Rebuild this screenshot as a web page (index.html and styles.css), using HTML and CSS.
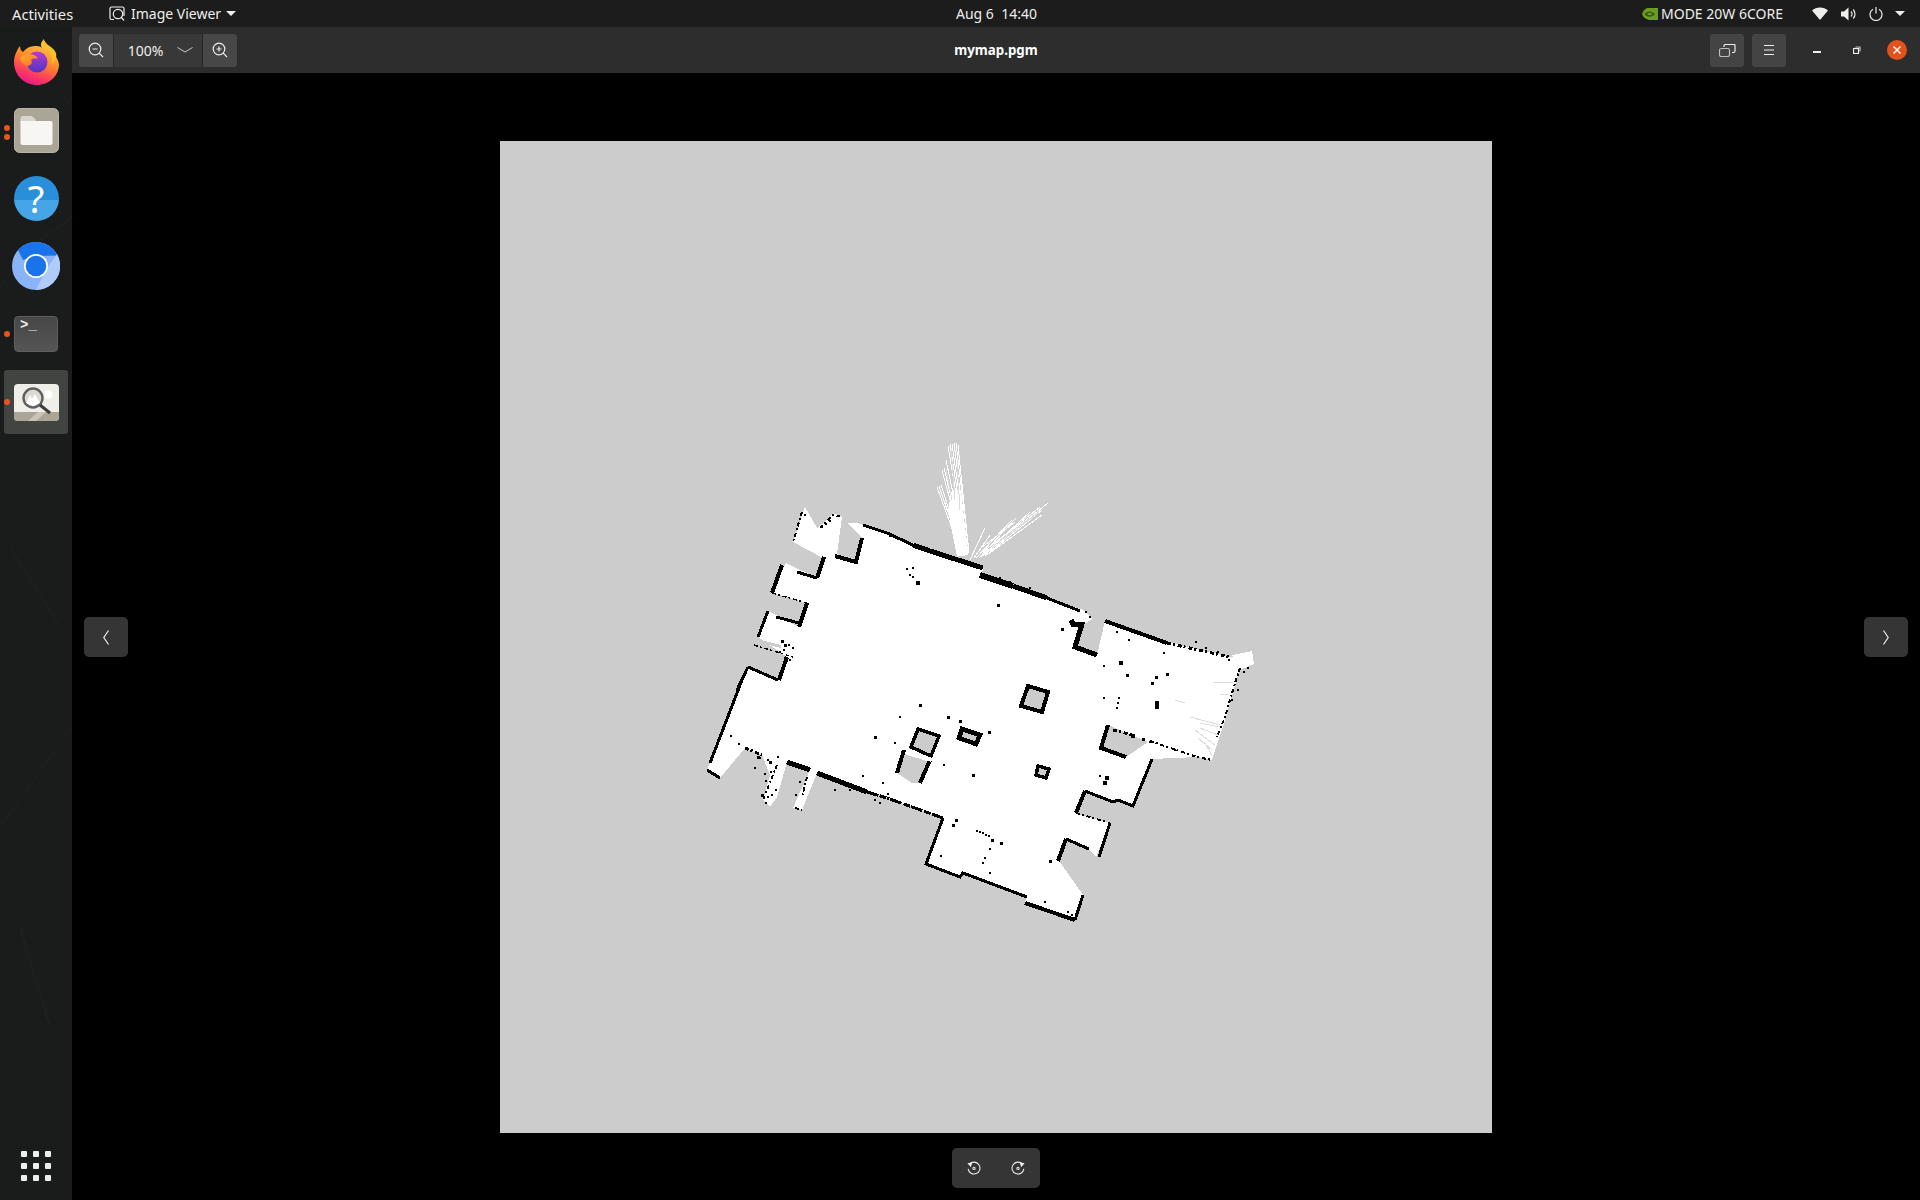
FILE: index.html
```html
<!DOCTYPE html>
<html lang="en">
<head>
<meta charset="utf-8">
<title>mymap.pgm - Image Viewer</title>
<link rel="stylesheet" href="styles.css">
</head>
<body>
<header class="topbar">
  <div class="tb-left">
    <span class="tb-activities">Activities</span>
    <span class="tb-app">
      <svg class="tb-appicon" viewBox="0 0 16 16"><path class="ln" d="M5 13.500H2.500a1.500 1.500 0 0 1-1.500-1.500V2.500A1.500 1.500 0 0 1 2.500 1h11A1.500 1.500 0 0 1 15 2.500V10"/><circle class="ln" cx="9" cy="8" r="4.700"/><path class="ln" d="M12.500 11.500l2.500 3"/></svg>
      <span>Image Viewer</span>
      <i class="tri"></i>
    </span>
  </div>
  <time class="tb-clock">Aug 6&nbsp; 14:40</time>
  <div class="tb-right">
    <svg class="tb-nvidia" viewBox="0 0 16 12"><path class="nv" d="M5 0h11v12H7C3 11 1 9 0 6 1 3 3 1 5 0z"/><path class="nvd" d="M2.500 6C5 2.500 10 2.500 13 6 10 9.500 5 9.500 2.500 6z"/><path class="nv" d="M5 6C7 4 9 4.500 10.500 6 9 7.500 7 8 5 6z"/></svg>
    <span class="tb-mode">MODE 20W 6CORE</span>
    <svg class="tb-wifi" viewBox="0 0 16 13"><path class="fillw" d="M8 13L0 3.500C2 1.500 5 .5 8 .5s6 1 8 3z"/></svg>
    <svg class="tb-vol" viewBox="0 0 15 14"><path class="fillw" d="M0 4.500h3L7.500 .5v13L3 9.500H0z"/><path class="ln" d="M10 4.500a3.500 3.500 0 0 1 0 5M12.200 2.500a6.500 6.500 0 0 1 0 9"/></svg>
    <svg class="tb-pow" viewBox="0 0 14 14"><path class="ln" d="M4 2.300a6 6 0 1 0 6 0M7 0v6.500"/></svg>
    <i class="tri tri-r"></i>
  </div>
</header>

<div class="desktop">
  <nav class="dock">
    <svg class="dock-bg" viewBox="0 0 72 1173" preserveAspectRatio="none"><path class="dock-line" d="M0 260L30 220 72 190M0 350L28 325M10 520L60 600M0 800L72 700M20 900L50 1000M50 100L72 70M40 610L72 640"/></svg>
    <div class="dock-item">
      <svg class="ic-firefox" viewBox="0 0 45 46">
        <defs>
          <linearGradient id="ffa" x1=".7" y1="0" x2=".3" y2="1"><stop offset="0" stop-color="#ffd93a"/><stop offset=".45" stop-color="#ff8a2a"/><stop offset=".75" stop-color="#ff3d5c"/><stop offset="1" stop-color="#e3168c"/></linearGradient>
          <linearGradient id="ffb" x1=".5" y1="0" x2=".5" y2="1"><stop offset="0" stop-color="#b63bd0"/><stop offset="1" stop-color="#4f35c4"/></linearGradient>
          <linearGradient id="ffc" x1="0" y1="0" x2="1" y2="1"><stop offset="0" stop-color="#ffb22e"/><stop offset="1" stop-color="#ff6a1e"/></linearGradient>
        </defs>
        <path fill="url(#ffa)" d="M30 0c-1 5 2 8 6 11 5 4 8 9 9 14 0 12-10 21-22 21C10 46 0 36 0 23 0 17 3 11 6 7c0 3 1 5 3 6 3-4 7-6 12-6 2 0 5 0 7 2-2-3-1-6 2-9z"/>
        <circle fill="url(#ffb)" cx="23" cy="23" r="10.500"/>
        <path fill="url(#ffc)" d="M6 19c4-4 9-5 14-3 3 1 4 3 3 4-3-1-5 0-6 1 2 3 0 5-3 6-4 0-7-4-8-8z"/>
        <path fill="#ffc02e" d="M30 0c-2 4 0 7 3 10 4 4 6 9 5 15 3-3 5-7 4-11-2-4-5-6-8-8-2-2-4-4-4-6z"/>
      </svg>
    </div>
    <div class="dock-item">
      <i class="run run-a"></i><i class="run run-b"></i>
      <svg class="ic-files" viewBox="0 0 45 45"><rect class="fl-bg" x=".5" y=".5" width="44" height="44" rx="5"/><path class="fl-back" d="M6.500 15v-5a2 2 0 0 1 2-2h9l4 3v4z"/><path class="fl-front" d="M6.500 13h30a2 2 0 0 1 2 2v20a2 2 0 0 1-2 2h-28a2 2 0 0 1-2-2z"/></svg>
    </div>
    <div class="dock-item">
      <span class="ic-help"><span class="ic-help-q">?</span></span>
    </div>
    <div class="dock-item">
      <svg class="ic-chrome" viewBox="0 0 48 48"><circle class="cr-a" cx="24" cy="24" r="24"/><path class="cr-b" d="M24 0a24 24 0 0 1 21.500 13.500L24 14 11 18 6 8A24 24 0 0 1 24 0z"/><path class="cr-c" d="M45 12a24 24 0 0 1-21 36l10-20z"/><circle class="cr-d" cx="24" cy="24" r="12"/><circle class="cr-e" cx="24" cy="24" r="10.300"/></svg>
    </div>
    <div class="dock-item">
      <i class="run run-c"></i>
      <span class="ic-term"><span class="ic-term-p">&gt;_</span></span>
    </div>
    <div class="dock-item dock-item-on">
      <i class="run run-c"></i>
      <svg class="ic-viewer" viewBox="0 0 45 37"><rect class="vw-bg" width="45" height="37" rx="4"/><path class="vw-band" d="M0 28h45v5a4 4 0 0 1-4 4H4a4 4 0 0 1-4-4z"/><path class="vw-band2" d="M14 37l10-9h8L22 37z"/><circle class="vw-sun" cx="34.500" cy="10.500" r="4"/><circle class="vw-lens" cx="19" cy="14" r="9.500"/><path class="vw-mt" d="M12 19l4-8 2 4 3-5 5 9-7 3z"/><path class="vw-handle" d="M26 21l10 8"/></svg>
    </div>
    <div class="dock-grid">
      <i></i><i></i><i></i><i></i><i></i><i></i><i></i><i></i><i></i>
    </div>
  </nav>

  <main class="window">
    <div class="headerbar">
      <div class="hb-zoom">
        <button class="hb-btn hb-z"><svg class="ic16" viewBox="0 0 16 16"><circle class="ln" cx="7" cy="7" r="5.800"/><path class="ln" d="M11.200 11.200L15 15M4.500 7h5"/></svg></button>
        <button class="hb-btn hb-pct"><span>100%</span><svg class="ic-chev" viewBox="0 0 16 6"><path class="ln-thin" d="M.5.5L8 5 15.500.5"/></svg></button>
        <button class="hb-btn hb-z"><svg class="ic16" viewBox="0 0 16 16"><circle class="ln" cx="7" cy="7" r="5.800"/><path class="ln" d="M11.200 11.200L15 15M4.500 7h5M7 4.500v5"/></svg></button>
      </div>
      <div class="hb-title">mymap.pgm</div>
      <div class="hb-right">
        <button class="hb-btn hb-tool"><svg class="ic16w" viewBox="0 0 17 13"><path class="ln" d="M5 3V2a1.500 1.500 0 0 1 1.500-1.500h9A1.500 1.500 0 0 1 16 2v5a1.500 1.500 0 0 1-1.500 1.500H13"/><rect class="ln-dim" x=".5" y="4.500" width="10" height="8" rx="1.800"/></svg></button>
        <button class="hb-btn hb-tool"><svg class="ic16" viewBox="0 0 16 16"><path class="ln" d="M3 3.500h10M3 8h10M3 12.500h10"/></svg></button>
        <div class="hb-winctl">
          <span class="wc wc-min"></span>
          <svg class="wc-max" viewBox="0 0 8 8"><path class="ln-dim" d="M2.500 1h4.500v4.500"/><rect class="ln" x=".5" y="2.500" width="5" height="5"/></svg>
          <span class="wc-close"><svg class="wc-x" viewBox="0 0 8 8"><path class="ln-x" d="M.5.5l7 7M7.500.5l-7 7"/></svg></span>
        </div>
      </div>
    </div>
    <div class="canvas">
      <svg class="map" viewBox="500 141 992 992">
        <rect class="m-gray" x="500" y="141" width="992" height="992"/>
        <!-- free space -->
        <path class="m-white" d="M805 507L817 528 827 520 833 513 842 517 837 554 856 562 862 538 848 523 858 523 983 568 982 575 1083 610 1092 619 1080 627 1073 647 1097 655 1105 621 1168 642 1230 657 1250 653 1252 663 1240 668 1225 720 1212 760 1197 757 1152 759 1133 806 1118 800 1113 802 1085 791 1075 813 1110 823 1096 857 1089 849 1066 839 1058 861 1062 865 1083 895 1075 920 1025 903 1027 897 963 873 960 877 926 864 943 818 817 773 802 810 793 808 810 770 787 762 777 797 770 807 763 800 770 775 762 755 745 748 720 778 707 770 748 667 779 680 787 657 758 637 768 611 799 627 807 603 772 593 786 563 817 578 823 558 793 542z"/>
        <!-- rays -->
        <path class="m-white" d="M957 557L948 510 952 490 961 490 968 553z"/>
        <path class="m-ray" d="M962 556L937 487M963 556L939 486M964 556L941 485M965 556L942 470M965 555L944 468M966 555L946 460M966 555L948 446M967 555L950 444M968 555L952 444M968 554L954 443M969 553L956 443M969 553L958 445M970 560L985 528M974 558L990 535M976 558L1012 520M979 558L1016 518M981 557L1030 512M983 556L1048 503M985 556L1042 510M987 555L1042 515M983 552L1040 507M985 550L1037 512M981 548L1015 522"/>
        <path class="m-graythin" d="M952 500L946 470M955 500L951 448M960 510L957 460M1000 540L1030 518M1005 538L1038 513M1213 682L1233 682M1220 694L1228 694M1190 717L1220 725M1200 723L1220 727M1195 730L1215 745M1200 728L1218 735M1204 742L1212 755M1198 738L1212 750M1175 700L1185 703"/>
        <path class="m-white" d="M1232 655L1252 651 1254 664 1240 670 1236 660z"/>
        <!-- islands -->
        <path class="m-gray m-w4" d="M1028 686L1048 692 1042 712 1021 706z"/>
        <path class="m-gray m-w5" d="M962 729L980 735 976 744 959 738z"/>
        <path class="m-gray m-w3" d="M918 729L939 736 931 756 911 747z"/>
        <path class="m-gray" d="M904 754L930 762 920 783 912 783 897 773z"/>
        <path class="m-wall w4" d="M904 750L897 773M930 760L920 783"/>
        <path class="m-gray m-w3" d="M1038 766L1049 769 1046 778 1036 775z"/>
        <path class="m-gray" d="M1108 725L1148 742 1126 757 1101 748z"/>
        <path class="m-white" d="M909 750L932 758 931 762 905 752z"/>
        <path class="m-gray" d="M757 639L781 645 781 648 757 642z"/>
        <!-- walls -->
        <path class="m-wall w3" d="M863 525L887 533 913 545"/>
        <path class="m-wall w5" d="M913 545L930 551 983 568"/>
        <path class="m-wall w6" d="M980 575L1013 586"/>
        <path class="m-wall w5" d="M1013 586L1047 598"/>
        <path class="m-wall w3" d="M1047 598L1080 611"/>
        <path class="m-wall w5" d="M1071 620L1073 624 1082 624 1075 647 1097 655"/>
        <path class="m-wall w4" d="M1105 621L1167 643"/>
        <path class="m-wall w3 dash" d="M1167 643L1230 657"/>
        <path class="m-wall w2 dash" d="M1240 668L1235 683 1225 717 1217 737"/>
        <path class="m-wall w2 dash" d="M1150 741L1197 757 1212 760"/>
        <path class="m-wall w4" d="M1108 725L1101 748 1126 757"/>
        <path class="m-wall w3 dash" d="M1113 730L1133 735"/>
        <path class="m-wall w3" d="M1152 759L1133 806 1118 800 1113 802"/>
        <path class="m-wall w3" d="M1113 802L1085 791"/>
        <path class="m-wall w4" d="M1085 791L1076 813"/>
        <path class="m-wall w2 dash" d="M1076 813L1110 823"/>
        <path class="m-wall w3" d="M1110 823L1099 857M1089 849L1066 839"/>
        <path class="m-wall w4" d="M1066 839L1058 861"/>
        <path class="m-wall w3" d="M1083 895L1075 920"/>
        <path class="m-wall w4" d="M1075 920L1025 903"/>
        <path class="m-wall w3" d="M1027 897L963 873 960 877 926 864 943 818"/>
        <path class="m-wall w3 dashlong" d="M943 818L887 798"/>
        <path class="m-wall w5" d="M817 773L867 792"/>
        <path class="m-wall w3 dashlong" d="M867 792L887 798"/>
        <path class="m-wall w5" d="M787 762L810 770"/>
        <path class="m-wall w2 dash" d="M807 777L802 797M795 808L802 810M777 765L763 800"/>
        <path class="m-wall w3" d="M742 680L710 763"/>
        <path class="m-wall w3" d="M748 667L737 690M707 770L720 778"/>
        <path class="m-wall w3 dash" d="M745 748L762 755"/>
        <path class="m-wall w3" d="M748 667L778 680"/>
        <path class="m-wall w4" d="M779 680L787 657"/>
        <path class="m-wall w3" d="M768 611L758 637M776 617L799 623"/>
        <path class="m-wall w4" d="M799 627L807 603M782 565L772 593"/>
        <path class="m-wall w1 dash" d="M772 593L807 603M754 645L793 657"/>
        <path class="m-wall w3" d="M797 572L817 578"/>
        <path class="m-wall w4" d="M817 578L824 557M835 556L856 562 862 538"/>
        <path class="m-wall w2 dash" d="M802 512L793 542 M820 528L828 520 833 515 842 517"/>
        <!-- speckles -->
        <path class="m-dot d2" d="M907 569h0M913 568h0M910 575h0M913 577h0M1104 666h0M1104 698h0M1129 640h0M1164 653h0M1119 698h0M1118 703h0M1117 708h0M900 717h0M731 736h0M739 744h0M895 743h0M944 765h0M863 776h0M883 783h0M888 794h0M941 856h0M977 831h0M980 832h0M983 833h0M986 835h0M989 836h0M990 849h0M985 858h0M983 863h0M990 873h0M1045 902h0M1068 912h0M1072 915h0M1079 905h0M756 752h0M760 758h0M768 760h0M755 768h0M765 774h0M778 757h0M771 772h0M766 781h0M776 790h0M768 797h0M766 803h0M772 795h0M800 782h0M796 795h0M804 788h0M789 645h0M784 650h0M793 648h0M780 652h0M785 658h0M790 660h0M1117 632h0M1196 642h0M1206 648h0M1218 652h0M1229 660h0M1248 668h0M1244 672h0M1238 690h0M1232 700h0M1150 742h0M1175 750h0M1100 776h0M805 515h0M822 527h0M826 524h0M830 521h0M880 530h0M1086 612h0M1090 617h0M890 536h0M905 541h0M1000 578h0M1030 588h0M1010 582h0M835 790h0M850 790h0M875 800h0M880 803h0"/>
        <path class="m-dot d3" d="M998 605h0M1062 629h0M1127 675h0M1156 677h0M1152 683h0M1167 674h0M920 705h0M948 717h0M960 721h0M989 732h0M875 737h0M973 775h0M953 825h0M956 820h0M1001 843h0M1050 861h0M1143 739h0M758 757h0M770 762h0M762 795h0M782 641h0M785 645h0M992 840h0"/>
        <path class="m-dot d4" d="M918 583h0M1121 663h0M1157 703h0M1157 707h0M1107 778h0M1105 783h0M1133 736h0"/>
      </svg>
      <button class="nav-btn nav-prev"><svg class="ic-nav" viewBox="0 0 6 15"><path class="ln" d="M5.500.5L.8 7.500l4.700 7"/></svg></button>
      <button class="nav-btn nav-next"><svg class="ic-nav" viewBox="0 0 6 15"><path class="ln" d="M.5.500l4.700 7-4.700 7"/></svg></button>
      <div class="osd">
        <svg class="ic-rot" viewBox="0 0 16 16"><path class="ln" d="M3 3.500A6.800 6.800 0 1 1 1.300 9"/><path class="fillw" d="M.5 2.500L6 1.500 4.500 7z"/><circle class="ln" cx="8" cy="8.500" r="1.300"/></svg>
        <svg class="ic-rot" viewBox="0 0 16 16"><path class="ln" d="M13 3.500A6.800 6.800 0 1 0 14.700 9"/><path class="fillw" d="M15.500 2.500L10 1.500 11.500 7z"/><circle class="ln" cx="8" cy="8.500" r="1.300"/></svg>
      </div>
    </div>
  </main>
</div>
</body>
</html>
```
FILE: styles.css
```css
* { box-sizing: border-box; }
html, body { margin: 0; height: 100%; }
body {
  width: 1920px;
  height: 1200px;
  overflow: hidden;
  background: #000;
  display: flex;
  flex-direction: column;
  font-family: "Noto Sans", "Open Sans", sans-serif;
  color: #eeeeec;
}
button { font: inherit; color: inherit; border: 0; padding: 0; margin: 0; }
svg { display: block; }

/* shared svg strokes */
.ln { fill: none; stroke: #eeeeec; stroke-width: 1.2; }
.ln-thin { fill: none; stroke: #c8c8c8; stroke-width: 1; }
.ln-dim { fill: none; stroke: #bdbdbd; stroke-width: 1.2; }
.ln-x { fill: none; stroke: #fff; stroke-width: 1.500; }
.fillw { fill: #eeeeec; }

/* top bar */
.topbar {
  flex: 0 0 27px;
  height: 27px;
  display: flex;
  align-items: center;
  background: #1c1c1c;
  font-size: 14px;
}
.tb-left { flex: 0 0 956px; display: flex; align-items: center; padding-left: 12px; }
.tb-activities { width: 97px; font-size: 14.700px; }
.tb-app { display: flex; align-items: center; }
.tb-appicon { width: 16px; height: 16px; margin-right: 6px; }
.tri { display: block; width: 0; height: 0; margin-left: 5px; border: 5px solid transparent; border-top: 5px solid #eeeeec; border-bottom: 0; }
.tb-clock { width: 80px; white-space: nowrap; font-size: 14px; }
.tb-right { flex: 1; display: flex; align-items: center; justify-content: flex-end; padding-right: 15px; }
.tb-nvidia { width: 16px; height: 12px; }
.nv { fill: #6a9e1f; }
.nvd { fill: #1c1c1c; opacity: .6; }
.tb-mode { margin-left: 3px; width: 123px; white-space: nowrap; }
.tb-wifi { width: 16px; height: 13px; margin-left: 28px; }
.tb-vol { width: 15px; height: 14px; margin-left: 13px; }
.tb-pow { width: 14px; height: 14px; margin-left: 13px; }
.tri-r { margin-left: 12px; }

/* desktop */
.desktop { flex: 1; display: flex; min-height: 0; }

/* dock */
.dock {
  position: relative;
  flex: 0 0 72px;
  width: 72px;
  display: flex;
  flex-direction: column;
  align-items: center;
  gap: 4px;
  padding: 3px 0 19px;
  background: #1a1c1b;
}
.dock-bg { position: absolute; inset: 0; width: 72px; height: 100%; }
.dock-line { fill: none; stroke: #1f2320; stroke-width: 1; }
.dock-item {
  position: relative;
  flex: 0 0 64px;
  width: 64px;
  display: flex;
  align-items: center;
  justify-content: center;
  border-radius: 3px;
}
.dock-item-on { background: #424442; }
.run { position: absolute; left: 0; width: 6px; height: 6px; border-radius: 50%; background: #e95420; }
.run-a { top: 27px; }
.run-b { top: 36px; }
.run-c { top: 29px; }
.ic-firefox { width: 45px; height: 46px; }
.ic-files { width: 45px; height: 45px; }
.fl-bg { fill: #aba595; stroke: #b9b4a6; }
.fl-back { fill: #d8d5cc; }
.fl-front { fill: #f7f6f4; }
.ic-help {
  width: 45px;
  height: 45px;
  border-radius: 50%;
  display: flex;
  align-items: center;
  justify-content: center;
  background: linear-gradient(#2a8fdb 0 54%, #46a5e6 54% 100%);
}
.ic-help-q { font-size: 38px; line-height: 45px; color: #fff; font-family: "Noto Sans", sans-serif; font-weight: 400; }
.ic-chrome { width: 48px; height: 48px; }
.cr-a { fill: #8ab4f8; }
.cr-b { fill: #1a73e8; }
.cr-c { fill: #aecbfa; }
.cr-d { fill: #fff; }
.cr-e { fill: #1a73e8; }
.ic-term {
  width: 44px;
  height: 36px;
  border-radius: 4px;
  border: 1px solid #5e5e5e;
  background: linear-gradient(#474747, #555);
  padding: 0 0 0 5px;
}
.ic-term-p { display: block; font: 700 14px/17px "Liberation Mono", monospace; color: #eee; }
.ic-viewer { width: 45px; height: 37px; }
.vw-bg { fill: #f0eee8; }
.vw-band { fill: #aba595; }
.vw-band2 { fill: #c9c4b6; }
.vw-sun { fill: #fff; }
.vw-mt { fill: #fff; }
.vw-lens { fill: #dcdad3; stroke: #5f5f5f; stroke-width: 2.400; }
.vw-handle { fill: none; stroke: #3c3c3c; stroke-width: 3; }
.dock-grid {
  position: relative;
  margin-top: auto;
  display: grid;
  grid-template-columns: repeat(3, 6px);
  grid-auto-rows: 6px;
  gap: 6px;
}
.dock-grid i { display: block; background: #eee; border-radius: 1px; }

/* window */
.window { flex: 1; display: flex; flex-direction: column; min-width: 0; }
.headerbar {
  position: relative;
  flex: 0 0 46px;
  display: flex;
  align-items: center;
  justify-content: space-between;
  padding: 0 13px 0 7px;
  background: #2d2d2d;
}
.hb-btn {
  display: flex;
  align-items: center;
  justify-content: center;
  height: 33px;
  background: #444;
  border-radius: 3px;
}
.hb-zoom { display: flex; gap: 1px; background: #262626; border-radius: 3px; }
.hb-z { width: 34px; }
.hb-zoom .hb-z:first-child { border-radius: 3px 0 0 3px; background: #474747; }
.hb-zoom .hb-z:last-child { border-radius: 0 3px 3px 0; background: #474747; }
.hb-pct { width: 88px; border-radius: 0; background: #383838; font-size: 14px; padding-left: 5px; gap: 14px; }
.ic16 { width: 16px; height: 16px; }
.ic16w { width: 17px; height: 13px; }
.ic-chev { width: 16px; height: 6px; }
.hb-title {
  position: absolute;
  left: 0;
  right: 0;
  text-align: center;
  font-size: 13.300px;
  font-weight: 700;
  color: #fff;
  pointer-events: none;
}
.hb-right { display: flex; align-items: center; gap: 8px; }
.hb-tool { width: 34px; }
.hb-winctl { display: flex; align-items: center; margin-left: 19px; }
.wc-min { display: block; width: 8px; height: 1.500px; background: #eee; margin-top: 4px; }
.wc-max { width: 8px; height: 8px; margin-left: 32px; }
.wc-close {
  display: flex;
  align-items: center;
  justify-content: center;
  width: 20px;
  height: 20px;
  margin-left: 26px;
  border-radius: 50%;
  background: #e4521c;
}
.wc-x { width: 8px; height: 8px; }

/* canvas */
.canvas {
  position: relative;
  flex: 1;
  display: flex;
  align-items: center;
  justify-content: center;
  background: #000;
}
.map { width: 992px; height: 992px; shape-rendering: crispEdges; }
.m-gray { fill: #cccccc; }
.m-white { fill: #fff; }
.m-ray { fill: none; stroke: #fff; stroke-width: 1; }
.m-graythin { fill: none; stroke: #dcdcdc; stroke-width: 1; }
.m-w3 { stroke: #000; stroke-width: 3.500; }
.m-w4 { stroke: #000; stroke-width: 4; }
.m-w5 { stroke: #000; stroke-width: 4.500; }
.m-wall { fill: none; stroke: #000; stroke-linejoin: miter; }
.w1 { stroke-width: 1.500; }
.w2 { stroke-width: 2; }
.w3 { stroke-width: 3; }
.w4 { stroke-width: 4; }
.w5 { stroke-width: 5; }
.w6 { stroke-width: 6; }
.dash { stroke-dasharray: 4 2 2 3; }
.dashlong { stroke-dasharray: 12 1 7 2; }
.m-dot { fill: none; stroke: #000; stroke-linecap: square; }
.d2 { stroke-width: 2; }
.d3 { stroke-width: 3; }
.d4 { stroke-width: 4; }

.nav-btn {
  position: absolute;
  top: 544px;
  display: flex;
  align-items: center;
  justify-content: center;
  width: 44px;
  height: 40px;
  border-radius: 5px;
  background: #353535;
}
.nav-prev { left: 12px; }
.nav-next { right: 12px; }
.ic-nav { width: 6px; height: 15px; }
.osd {
  position: absolute;
  left: 880px;
  bottom: 12px;
  width: 88px;
  height: 40px;
  border-radius: 5px;
  background: #353535;
  display: flex;
  align-items: center;
  justify-content: center;
  gap: 30px;
}
.ic-rot { width: 14px; height: 14px; }
```
